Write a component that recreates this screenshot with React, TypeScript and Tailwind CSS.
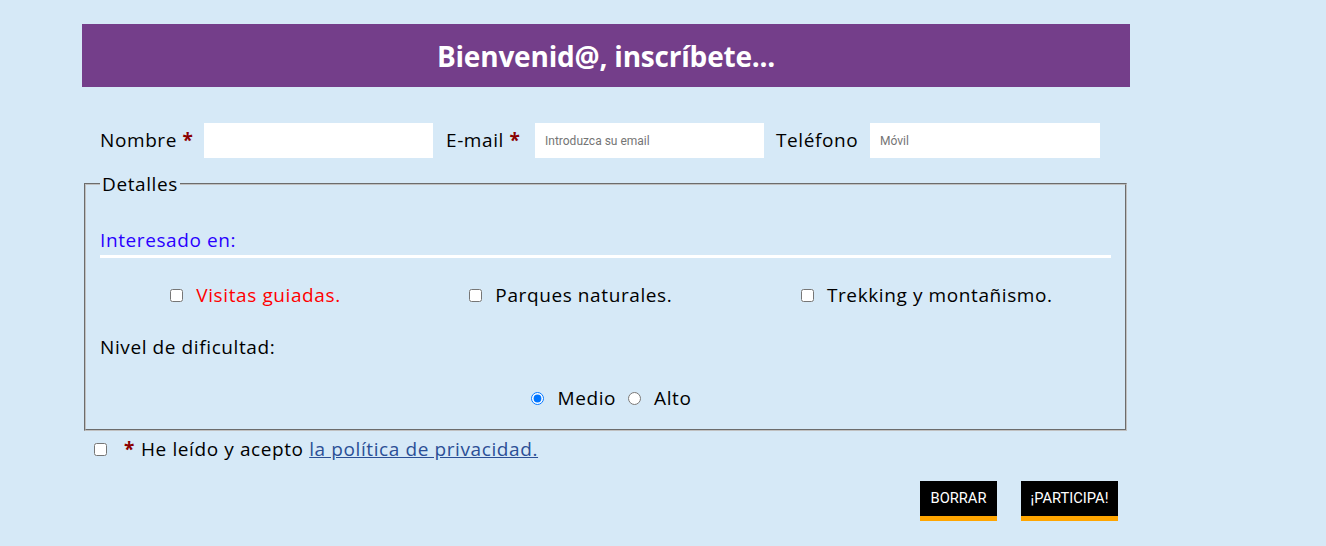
import React from "react";

const body = { fontFamily: '"Open Sans", "Noto Sans", sans-serif' };
const btn = { fontFamily: 'Roboto, "Liberation Sans", sans-serif' };

export default function App() {
  return (
    <div className="min-h-[546px] w-full bg-[#d6e9f7] pt-[24px]" style={body}>
      <div className="ml-[82px] w-[1048px]">
        <div className="flex h-[63px] items-center justify-center bg-[#743e8a]">
          <h1 className="text-[28px] font-bold tracking-[-0.2px] text-white">Bienvenid@, inscríbete...</h1>
        </div>

        <div className="mt-[36px] flex h-[35px] items-center pl-[18px] text-[19px] tracking-[0.6px] text-black">
          <label className="w-[104px]">
            Nombre <span className="font-bold text-[#8b0000]">*</span>
          </label>
          <input className="h-[35px] w-[229px] bg-white px-[10px] text-[12px] tracking-normal outline-none" style={btn} />
          <label className="ml-[13px] w-[89px]">
            E-mail <span className="font-bold text-[#8b0000]">*</span>
          </label>
          <input
            className="h-[35px] w-[229px] bg-white px-[10px] text-[12px] tracking-normal outline-none placeholder:text-[#757575]"
            style={btn}
            placeholder="Introduzca su email"
          />
          <label className="ml-[12px] w-[94px]">Teléfono</label>
          <input
            className="h-[35px] w-[230px] bg-white px-[10px] text-[12px] tracking-normal outline-none placeholder:text-[#757575]"
            style={btn}
            placeholder="Móvil"
          />
        </div>

        <fieldset className="ml-[2px] mt-[14px] w-[1043px] border-2 border-[#c0c0c0] px-[14px] pb-[17px] text-[19px] tracking-[0.6px] [border-style:groove]">
          <legend className="px-[2px] leading-[24px] text-black">Detalles</legend>
          <div className="mt-[32px] leading-[24px] text-[#2a00ff]">Interesado en:</div>
          <div className="mt-[3px] h-[3px] w-full bg-white" />
          <div className="-mr-[6px] ml-[6px] mt-[23px] flex h-[28px] items-center justify-around text-black">
            <label className="flex items-center">
              <input type="checkbox" className="m-0 h-[13px] w-[13px]" />
              <span className="ml-[13px] text-[#ff0000]">Visitas guiadas.</span>
            </label>
            <label className="flex items-center">
              <input type="checkbox" className="m-0 h-[13px] w-[13px]" />
              <span className="ml-[13px]">Parques naturales.</span>
            </label>
            <label className="flex items-center">
              <input type="checkbox" className="m-0 h-[13px] w-[13px]" />
              <span className="ml-[13px]">Trekking y montañismo.</span>
            </label>
          </div>
          <div className="mt-[24px] leading-[28px] text-black">Nivel de dificultad:</div>
          <div className="mt-[23px] flex h-[28px] items-center justify-center pl-[12px] text-black">
            <label className="flex items-center">
              <input type="radio" name="nivel" defaultChecked className="m-0 h-[13px] w-[13px]" />
              <span className="ml-[13px]">Medio</span>
            </label>
            <label className="ml-[12px] flex items-center">
              <input type="radio" name="nivel" className="m-0 h-[13px] w-[13px]" />
              <span className="ml-[13px]">Alto</span>
            </label>
          </div>
        </fieldset>

        <div className="mt-[5px] flex h-[26px] items-center pl-[12px] text-[19px] tracking-[0.6px] text-black">
          <input type="checkbox" className="m-0 h-[13px] w-[13px]" />
          <span className="ml-[17px] font-bold text-[#8b0000]">*</span>
          <span className="ml-[6px]">
            He leído y acepto{" "}
            <a href="#" className="text-[#2b4f96] underline">
              la política de privacidad.
            </a>
          </span>
        </div>

        <div className="mt-[19px] flex justify-end gap-[24px] pr-[12px]" style={btn}>
          <button className="h-[40px] w-[77px] border-b-[5px] border-[#ffa500] bg-black text-[14.7px] text-white">
            BORRAR
          </button>
          <button className="h-[40px] w-[97px] border-b-[5px] border-[#ffa500] bg-black text-[14.7px] text-white">
            ¡PARTICIPA!
          </button>
        </div>
      </div>
    </div>
  );
}
